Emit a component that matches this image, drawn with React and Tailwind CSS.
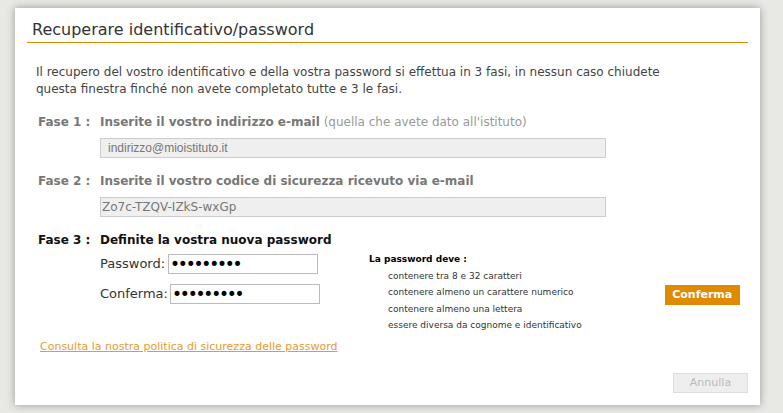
const font = { fontFamily: '"DejaVu Sans", "Open Sans", sans-serif' }

const rules = [
  'contenere tra 8 e 32 caratteri',
  'contenere almeno un carattere numerico',
  'contenere almeno una lettera',
  'essere diversa da cognome e identificativo'
]

export default function App() {
  return (
    <div className="w-[783px] h-[413px] bg-[#e8e8e5] pt-[8px] pl-[15px] overflow-hidden" style={font}>
      <div className="w-[745px] h-[397px] bg-white shadow-[0_0_8px_rgba(0,0,0,0.35)] flex flex-col">
        <div className="mx-[12px] mt-[12px] pl-[5px] h-[23px] border-b border-[#e08a00] text-[16px] leading-[20px] text-[#333]">
          Recuperare identificativo/password
        </div>

        <p className="mt-[21px] ml-[21px] w-[665px] text-[12px] leading-[17px] text-[#444]">
          Il recupero del vostro identificativo e della vostra password si effettua in 3 fasi, in nessun caso chiudete questa finestra finché non avete completato tutte e 3 le fasi.
        </p>

        <div className="mt-[16px] ml-[23px] text-[12px] leading-[16px] text-[#777]">
          <div className="flex">
            <span className="w-[62px] font-bold">Fase 1 :</span>
            <span><b>Inserite il vostro indirizzo e-mail</b> <span className="text-[#999]">(quella che avete dato all'istituto)</span></span>
          </div>
          <div className="ml-[62px] mt-[8px] w-[506px] h-[20px] bg-[#efefef] border border-[#ccc] pl-[7px] text-[12px] leading-[18px] text-[#777]" style={{ fontFamily: '"Liberation Sans", Arial, sans-serif' }}>
            indirizzo@mioistituto.it
          </div>

          <div className="flex mt-[15px]">
            <span className="w-[62px] font-bold">Fase 2 :</span>
            <b>Inserite il vostro codice di sicurezza ricevuto via e-mail</b>
          </div>
          <div className="ml-[62px] mt-[8px] w-[506px] h-[20px] bg-[#efefef] border border-[#ccc] pl-[1px] text-[12px] leading-[18px] text-[#777]">
            Zo7c-TZQV-IZkS-wxGp
          </div>

          <div className="flex mt-[15px] text-[#111]">
            <span className="w-[62px] font-bold">Fase 3 :</span>
            <b>Definite la vostra nuova password</b>
          </div>

          <div className="flex mt-[3px]">
            <div className="ml-[62px] w-[220px] text-[#333] text-[13px]">
              <div className="flex items-center mt-[3px]">
                <span className="w-[68px]">Password:</span>
                <div className="w-[150px] h-[20px] border border-[#bbb] pl-[1px] text-[17px] leading-[18px] text-black tracking-[-2.2px]">•••••••••</div>
              </div>
              <div className="flex items-center mt-[10px]">
                <span className="w-[70px]">Conferma:</span>
                <div className="w-[150px] h-[20px] border border-[#bbb] pl-[1px] text-[17px] leading-[18px] text-black tracking-[-2.2px]">•••••••••</div>
              </div>
            </div>

            <div className="ml-[49px] text-[9px] leading-[16.6px] text-[#333]">
              <div className="font-bold text-black">La password deve :</div>
              {rules.map((r) => (
                <div key={r} className="pl-[19px]">{r}</div>
              ))}
            </div>

            <div className="ml-[83px] mt-[34px]">
              <button className="w-[75px] h-[20px] bg-[#e08a00] text-white text-[11px] font-bold">Conferma</button>
            </div>
          </div>

          <a href="#" className="block mt-[5px] ml-[2px] text-[11px] text-[#e89a30] underline">
            Consulta la nostra politica di sicurezza delle password
          </a>
        </div>

        <div className="flex justify-end mt-auto mb-[12px] mr-[12px]">
          <button className="w-[75px] h-[20px] bg-[#eee] border border-[#ddd] text-[11px] text-[#bbb]">Annulla</button>
        </div>
      </div>
    </div>
  )
}
